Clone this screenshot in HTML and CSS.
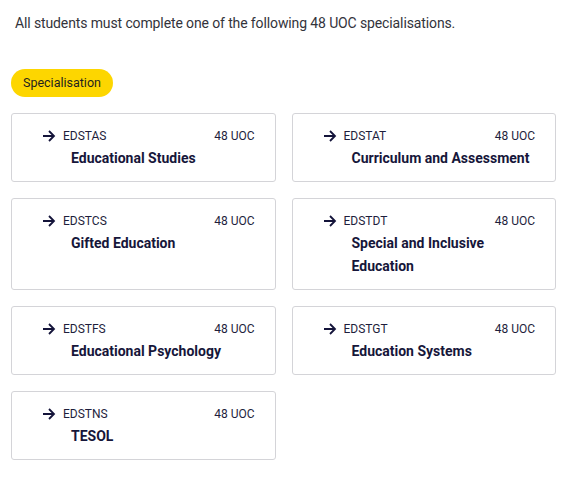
FILE: index.html
```html
<!DOCTYPE html>
<html lang="en">
<head>
    <meta charset="UTF-8">
    <meta name="viewport" content="width=device-width, initial-scale=1.0">
    <title>Specialisations</title>
    <link rel="stylesheet" href="styles.css">
</head>
<body>
    <div class="container">
        <p class="intro">All students must complete one of the following 48 UOC specialisations.</p>
        <span class="badge">Specialisation</span>

        <div class="cards">
            <a class="card" href="#">
                <div class="card-head">
                    <svg class="arrow" width="14" height="12" viewBox="0 0 14 12"><path d="M1 6h11M7 1l5 5-5 5" fill="none" stroke="#14143a" stroke-width="1.8"/></svg>
                    <span class="code">EDSTAS</span>
                    <span class="uoc">48 UOC</span>
                </div>
                <div class="title">Educational Studies</div>
            </a>
            <a class="card" href="#">
                <div class="card-head">
                    <svg class="arrow" width="14" height="12" viewBox="0 0 14 12"><path d="M1 6h11M7 1l5 5-5 5" fill="none" stroke="#14143a" stroke-width="1.8"/></svg>
                    <span class="code">EDSTAT</span>
                    <span class="uoc">48 UOC</span>
                </div>
                <div class="title">Curriculum and Assessment</div>
            </a>
            <a class="card" href="#">
                <div class="card-head">
                    <svg class="arrow" width="14" height="12" viewBox="0 0 14 12"><path d="M1 6h11M7 1l5 5-5 5" fill="none" stroke="#14143a" stroke-width="1.8"/></svg>
                    <span class="code">EDSTCS</span>
                    <span class="uoc">48 UOC</span>
                </div>
                <div class="title">Gifted Education</div>
            </a>
            <a class="card" href="#">
                <div class="card-head">
                    <svg class="arrow" width="14" height="12" viewBox="0 0 14 12"><path d="M1 6h11M7 1l5 5-5 5" fill="none" stroke="#14143a" stroke-width="1.8"/></svg>
                    <span class="code">EDSTDT</span>
                    <span class="uoc">48 UOC</span>
                </div>
                <div class="title">Special and Inclusive<br>Education</div>
            </a>
            <a class="card" href="#">
                <div class="card-head">
                    <svg class="arrow" width="14" height="12" viewBox="0 0 14 12"><path d="M1 6h11M7 1l5 5-5 5" fill="none" stroke="#14143a" stroke-width="1.8"/></svg>
                    <span class="code">EDSTFS</span>
                    <span class="uoc">48 UOC</span>
                </div>
                <div class="title">Educational Psychology</div>
            </a>
            <a class="card" href="#">
                <div class="card-head">
                    <svg class="arrow" width="14" height="12" viewBox="0 0 14 12"><path d="M1 6h11M7 1l5 5-5 5" fill="none" stroke="#14143a" stroke-width="1.8"/></svg>
                    <span class="code">EDSTGT</span>
                    <span class="uoc">48 UOC</span>
                </div>
                <div class="title">Education Systems</div>
            </a>
            <a class="card" href="#">
                <div class="card-head">
                    <svg class="arrow" width="14" height="12" viewBox="0 0 14 12"><path d="M1 6h11M7 1l5 5-5 5" fill="none" stroke="#14143a" stroke-width="1.8"/></svg>
                    <span class="code">EDSTNS</span>
                    <span class="uoc">48 UOC</span>
                </div>
                <div class="title">TESOL</div>
            </a>
        </div>
    </div>
</body>
</html>
```

FILE: styles.css
```css
body {
    font-family: Roboto, 'Liberation Sans', sans-serif;
    margin: 0;
    padding: 0;
    background: #fff;
    color: #2b2b33;
}

.container {
    padding: 13px 11px 16px 11px;
}

.intro {
    margin: 0 0 36px 4px;
    font-size: 14px;
    line-height: 20px;
    letter-spacing: -0.12px;
    color: #33333b;
}

.badge {
    display: inline-block;
    height: 28px;
    line-height: 28px;
    padding: 0 12px;
    border-radius: 14px;
    background: #fdd600;
    font-size: 12.5px;
    color: #1f1f1f;
}

.cards {
    display: grid;
    grid-template-columns: 1fr 1fr;
    gap: 16px;
    margin-top: 16px;
}

.card {
    display: block;
    border: 1px solid #d4d4d8;
    border-radius: 3px;
    padding: 14px 20px 11px 30px;
    text-decoration: none;
    color: #14143a;
}

.card-head {
    display: flex;
    align-items: center;
    height: 16px;
    font-size: 12px;
}

.arrow {
    flex: none;
    margin-right: 7px;
}

.code {
    flex: 1;
    color: #1e1e3c;
}

.uoc {
    color: #1e1e3c;
}

.title {
    margin: 3px 0 0 29px;
    font-size: 14px;
    line-height: 23px;
    font-weight: 700;
    color: #16163a;
}
```
